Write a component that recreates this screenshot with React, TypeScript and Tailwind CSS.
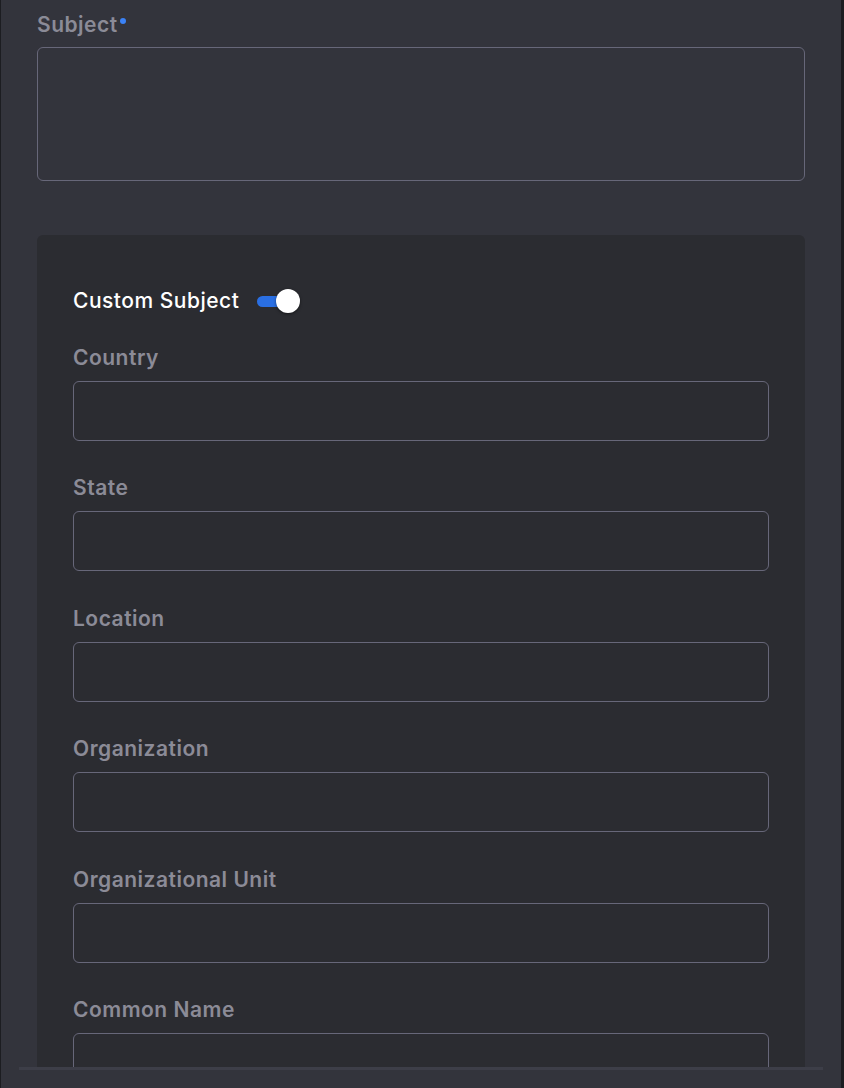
import React from "react";

const fields = ["Country", "State", "Location", "Organization", "Organizational Unit", "Common Name"];

export default function App() {
  return (
    <div
      className="flex h-[1088px] w-full overflow-hidden bg-[#1c1d21] pl-px pr-[3px]"
      style={{ fontFamily: "Inter, 'Noto Sans', sans-serif" }}
    >
      <div className="flex flex-1 flex-col bg-[#33343c]">
        <div className="h-[1067px] overflow-hidden px-9 pt-[13px]">
          <div className="flex items-start text-[21px] font-semibold leading-[24px] tracking-[0.5px] text-[#8b8b97]">
            <span>Subject</span>
            <span className="ml-[2px] mt-[5px] h-[6px] w-[6px] rounded-full bg-[#3b82f6]" />
          </div>
          <div className="mt-[10px] h-[134px] rounded-md border border-[#676779] bg-[#33343c]" />

          <div className="mt-[54px] rounded-md bg-[#2b2c31] px-9 pt-[54px] pb-10">
            <div className="flex items-center">
              <span className="text-[21px] font-medium leading-[24px] tracking-[0.5px] text-white">Custom Subject</span>
              <div className="relative ml-[18px] h-6 w-[43px]">
                <div className="absolute left-0 top-[7px] h-[11px] w-[30px] rounded-full bg-[#2a6fe3]" />
                <div className="absolute right-0 top-0 h-6 w-6 rounded-full bg-white shadow-[0_1px_3px_rgba(0,0,0,0.5)]" />
              </div>
            </div>
            <div className="mt-[32px] flex flex-col gap-[34.4px]">
              {fields.map((f) => (
                <div key={f} className="flex flex-col">
                  <span className="text-[21px] font-semibold leading-[26px] tracking-[0.5px] text-[#8b8b97]">{f}</span>
                  <div className="mt-[10px] h-[60px] rounded-md border border-[#676779] bg-[#2b2c31]" />
                </div>
              ))}
            </div>
          </div>
        </div>
        <div className="mx-[18px] h-[3px] bg-[#3d3e48]" />
        <div className="flex-1" />
      </div>
    </div>
  );
}
